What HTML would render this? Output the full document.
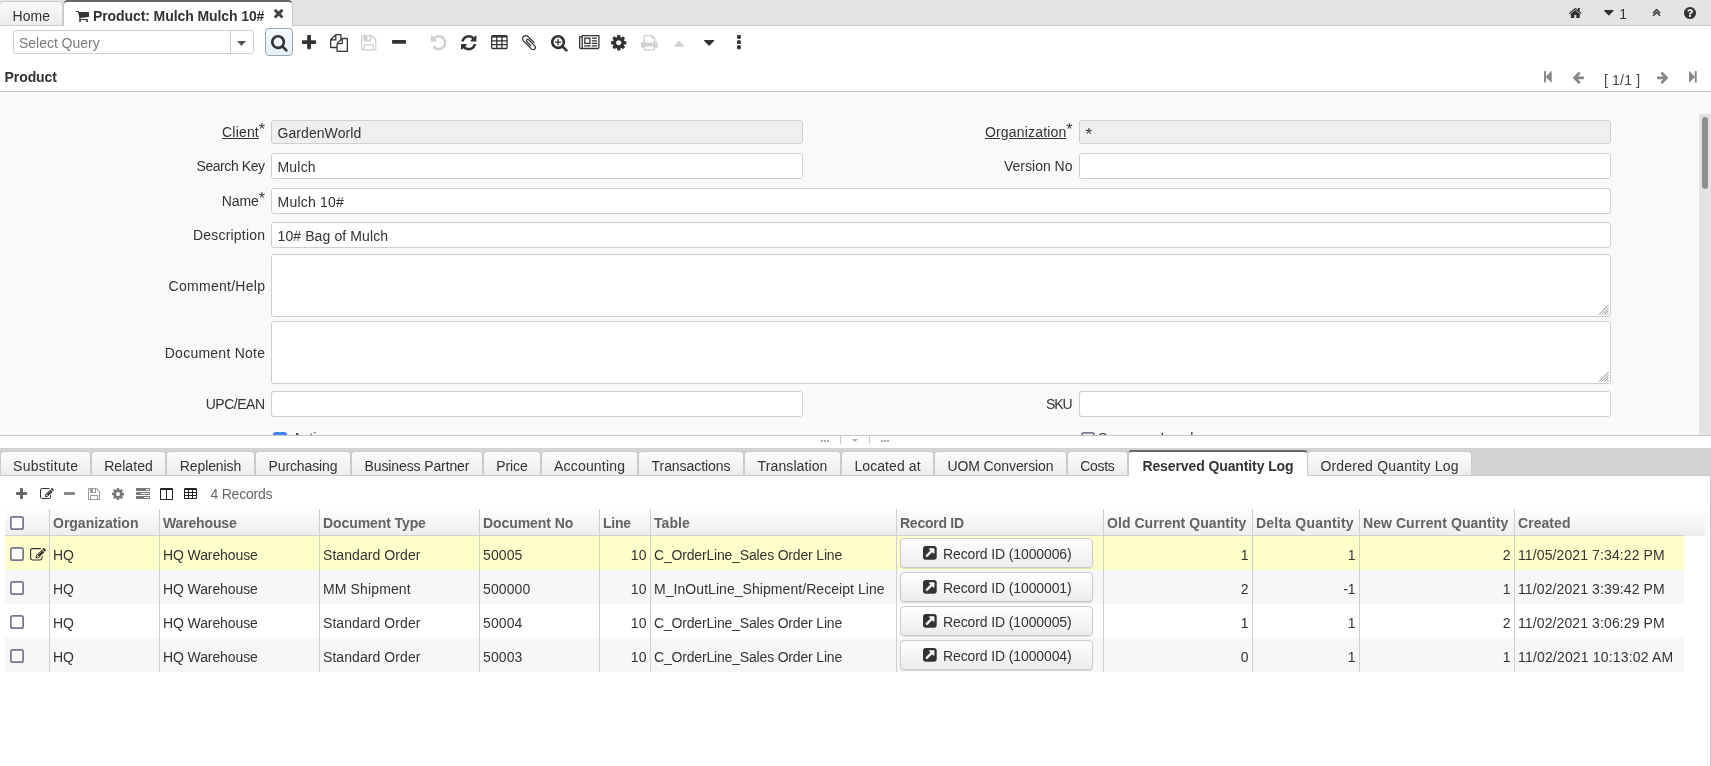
<!DOCTYPE html>
<html><head><meta charset="utf-8"><title>Product: Mulch Mulch 10#</title>
<style>
*{box-sizing:border-box}
html,body{margin:0;padding:0}
#root{position:absolute;left:0;top:0;width:1711px;height:766px;will-change:transform}
body{width:1711px;height:766px;overflow:hidden;position:relative;background:#fff;font-family:"Liberation Sans",sans-serif;font-size:14px;color:#333;line-height:20px}
.a{position:absolute;white-space:pre}
.ic{position:absolute;display:block;overflow:visible}
.b{font-weight:bold}
.inp{position:absolute;border:1px solid #cfcfcf;border-radius:3px;background:#fff;padding-left:5.5px;white-space:pre}
.ro{background:#efefef}
.lbl{position:absolute;text-align:right;white-space:pre}
.tab{position:absolute;top:451px;height:25px;border:1px solid #cbcbcb;border-bottom:none;border-radius:4px 4px 0 0;background:linear-gradient(#fcfcfc,#ececec);text-align:center;line-height:25px;white-space:pre}
.hc{position:absolute;top:509px;height:27px;border-left:1px solid #cfcfcf;font-weight:bold;color:#636363;padding-left:3px;line-height:28px;white-space:pre}
.row{position:absolute;left:5px;width:1679px;height:34px}
.c{position:absolute;top:0;height:34px;border-left:1px solid #cfcfcf;padding:0 3.5px 0 3px;line-height:39px;white-space:pre}
.r{text-align:right}
.cb{position:absolute;width:14px;height:14px;border:1.5px solid #767689;border-radius:2px;background:#fff}
.btn{position:absolute;left:895px;width:193px;height:30px;top:2px;border:1px solid #c9c9c9;border-radius:4px;background:linear-gradient(#fff,#ececec);box-shadow:0 1px 1px rgba(0,0,0,.12)}
</style></head><body><div id="root">
<div class="a" style="left:0;top:0;width:1711px;height:25px;background:#e4e4e4"></div>
<div class="a" style="left:0;top:25px;width:1711px;height:1px;background:#c8c8c8"></div>
<div class="a" style="left:-1px;top:1px;width:64px;height:25px;border:1px solid #cdcdcd;border-radius:4px 4px 0 0;background:linear-gradient(#fafafa,#ececec)"></div>
<div class="a" style="left:12.5px;top:6px"><span style="letter-spacing:0.102px;margin-right:-0.102px">Home</span></div>
<div class="a" style="left:63px;top:0;width:230px;height:26px;border:1px solid #c8c8c8;border-top:2px solid #666;border-bottom:none;border-radius:5px 5px 0 0;background:#fff"></div>
<svg class="ic" style="left:76.20px;top:11.00px;" width="13.00" height="11.00" viewBox="0 -1280 1664 1408"><path fill="#333" transform="scale(1,-1)" d="M640 0q0 -52 -38 -90t-90 -38t-90 38t-38 90t38 90t90 38t90 -38t38 -90zM1536 0q0 -52 -38 -90t-90 -38t-90 38t-38 90t38 90t90 38t90 -38t38 -90zM1664 1088v-512q0 -24 -16.5 -42.5t-40.5 -21.5l-1044 -122q13 -60 13 -70q0 -16 -24 -64h920q26 0 45 -19t19 -45 t-19 -45t-45 -19h-1024q-26 0 -45 19t-19 45q0 11 8 31.5t16 36t21.5 40t15.5 29.5l-177 823h-204q-26 0 -45 19t-19 45t19 45t45 19h256q16 0 28.5 -6.5t19.5 -15.5t13 -24.5t8 -26t5.5 -29.5t4.5 -26h1201q26 0 45 -19t19 -45z"/></svg>
<div class="a b" style="left:93px;top:6px"><span style="letter-spacing:-0.091px;margin-right:0.091px">Product: Mulch Mulch 10#</span></div>
<svg class="ic" style="left:273.70px;top:8.60px;" width="9.28" height="9.28" viewBox="110 -1170 1188 1188"><path fill="#444" transform="scale(1,-1)" d="M1298 214q0 -40 -28 -68l-136 -136q-28 -28 -68 -28t-68 28l-294 294l-294 -294q-28 -28 -68 -28t-68 28l-136 136q-28 28 -28 68t28 68l294 294l-294 294q-28 28 -28 68t28 68l136 136q28 28 68 28t68 -28l294 -294l294 294q28 28 68 28t68 -28l136 -136q28 -28 28 -68 t-28 -68l-294 -294l294 -294q28 -28 28 -68z"/></svg>
<svg class="ic" style="left:1568.50px;top:8.20px;" width="12.60" height="10.02" viewBox="25.88888931274414 -1283 1612.22216796875 1283"><path fill="#333" transform="scale(1,-1)" d="M1408 544v-480q0 -26 -19 -45t-45 -19h-384v384h-256v-384h-384q-26 0 -45 19t-19 45v480q0 1 0.5 3t0.5 3l575 474l575 -474q1 -2 1 -6zM1631 613l-62 -74q-8 -9 -21 -11h-3q-13 0 -21 7l-692 577l-692 -577q-12 -8 -24 -7q-13 2 -21 11l-62 74q-8 10 -7 23.5t11 21.5 l719 599q32 26 76 26t76 -26l244 -204v195q0 14 9 23t23 9h192q14 0 23 -9t9 -23v-408l219 -182q10 -8 11 -21.5t-7 -23.5z"/></svg>
<svg class="ic" style="left:1604.00px;top:10.30px;" width="9.71" height="5.46" viewBox="0 -896 1024 576"><path fill="#333" transform="scale(1,-1)" d="M1024 832q0 -26 -19 -45l-448 -448q-19 -19 -45 -19t-45 19l-448 448q-19 19 -19 45t19 45t45 19h896q26 0 45 -19t19 -45z"/></svg>
<div class="a" style="left:1619.3px;top:3.8px">1</div>
<svg class="ic" style="left:1652.60px;top:9.40px;" width="7.24" height="7.01" viewBox="77 -1107 998 966"><path fill="#333" stroke="#333" stroke-width="80" transform="scale(1,-1)" d="M1075 224q0 -13 -10 -23l-50 -50q-10 -10 -23 -10t-23 10l-393 393l-393 -393q-10 -10 -23 -10t-23 10l-50 50q-10 10 -10 23t10 23l466 466q10 10 23 10t23 -10l466 -466q10 -10 10 -23zM1075 608q0 -13 -10 -23l-50 -50q-10 -10 -23 -10t-23 10l-393 393l-393 -393 q-10 -10 -23 -10t-23 10l-50 50q-10 10 -10 23t10 23l466 466q10 10 23 10t23 -10l466 -466q10 -10 10 -23z"/></svg>
<svg class="ic" style="left:1683.80px;top:7.20px;" width="12.00" height="12.00" viewBox="0 -1408 1536 1536"><path fill="#333" transform="scale(1,-1)" d="M896 160v192q0 14 -9 23t-23 9h-192q-14 0 -23 -9t-9 -23v-192q0 -14 9 -23t23 -9h192q14 0 23 9t9 23zM1152 832q0 88 -55.5 163t-138.5 116t-170 41q-243 0 -371 -213q-15 -24 8 -42l132 -100q7 -6 19 -6q16 0 25 12q53 68 86 92q34 24 86 24q48 0 85.5 -26t37.5 -59 q0 -38 -20 -61t-68 -45q-63 -28 -115.5 -86.5t-52.5 -125.5v-36q0 -14 9 -23t23 -9h192q14 0 23 9t9 23q0 19 21.5 49.5t54.5 49.5q32 18 49 28.5t46 35t44.5 48t28 60.5t12.5 81zM1536 640q0 -209 -103 -385.5t-279.5 -279.5t-385.5 -103t-385.5 103t-279.5 279.5 t-103 385.5t103 385.5t279.5 279.5t385.5 103t385.5 -103t279.5 -279.5t103 -385.5z"/></svg>
<div class="a" style="left:13px;top:30px;width:241px;height:24px;border:1px solid #cfcfcf;border-radius:3px;background:#fff"></div>
<div class="a" style="left:230px;top:31px;width:1px;height:22px;background:#cfcfcf"></div>
<div class="a" style="left:19px;top:32.5px;color:#7c7c7c"><span style="letter-spacing:-0.025px;margin-right:0.025px">Select Query</span></div>
<svg class="ic" style="left:237.3px;top:41.3px" width="9" height="5" viewBox="0 0 9 5"><path d="M0 0H9L4.5 5Z" fill="#555"/></svg>
<div class="a" style="left:265px;top:28px;width:28px;height:28px;border:1px solid #9aa7b3;border-radius:4px;background:linear-gradient(#f4fafd,#e2eff8)"></div>
<svg class="ic" style="left:270.64px;top:34.96px;" width="16.71" height="16.71" viewBox="0 -1408 1664 1664"><path fill="#333" transform="scale(1,-1)" d="M1152 704q0 185 -131.5 316.5t-316.5 131.5t-316.5 -131.5t-131.5 -316.5t131.5 -316.5t316.5 -131.5t316.5 131.5t131.5 316.5zM1664 -128q0 -52 -38 -90t-90 -38q-54 0 -90 38l-343 342q-179 -124 -399 -124q-143 0 -273.5 55.5t-225 150t-150 225t-55.5 273.5 t55.5 273.5t150 225t225 150t273.5 55.5t273.5 -55.5t225 -150t150 -225t55.5 -273.5q0 -220 -124 -399l343 -343q37 -37 37 -90z"/></svg>
<svg class="ic" style="left:301.93px;top:34.96px;" width="14.14" height="14.14" viewBox="0 -1408 1408 1408"><path fill="#333" transform="scale(1,-1)" d="M1408 800v-192q0 -40 -28 -68t-68 -28h-416v-416q0 -40 -28 -68t-68 -28h-192q-40 0 -68 28t-28 68v416h-416q-40 0 -68 28t-28 68v192q0 40 28 68t68 28h416v416q0 40 28 68t68 28h192q40 0 68 -28t28 -68v-416h416q40 0 68 -28t28 -68z"/></svg>
<svg class="ic" style="left:330.00px;top:33.67px;" width="18.00" height="18.00" viewBox="0 -1536 1792 1792"><path fill="#333" transform="scale(1,-1)" d="M1696 1152q40 0 68 -28t28 -68v-1216q0 -40 -28 -68t-68 -28h-960q-40 0 -68 28t-28 68v288h-544q-40 0 -68 28t-28 68v672q0 40 20 88t48 76l408 408q28 28 76 48t88 20h416q40 0 68 -28t28 -68v-328q68 40 128 40h416zM1152 939l-299 -299h299v299zM512 1323l-299 -299 h299v299zM708 676l316 316v416h-384v-416q0 -40 -28 -68t-68 -28h-416v-640h512v256q0 40 20 88t48 76zM1664 -128v1152h-384v-416q0 -40 -28 -68t-68 -28h-416v-640h896z"/></svg>
<svg class="ic" style="left:361.29px;top:34.96px;" width="15.43" height="15.43" viewBox="0 -1408 1536 1536"><path fill="#d0d0d0" transform="scale(1,-1)" d="M384 0h768v384h-768v-384zM1280 0h128v896q0 14 -10 38.5t-20 34.5l-281 281q-10 10 -34 20t-39 10v-416q0 -40 -28 -68t-68 -28h-576q-40 0 -68 28t-28 68v416h-128v-1280h128v416q0 40 28 68t68 28h832q40 0 68 -28t28 -68v-416zM896 928v320q0 13 -9.5 22.5t-22.5 9.5 h-192q-13 0 -22.5 -9.5t-9.5 -22.5v-320q0 -13 9.5 -22.5t22.5 -9.5h192q13 0 22.5 9.5t9.5 22.5zM1536 896v-928q0 -40 -28 -68t-68 -28h-1344q-40 0 -68 28t-28 68v1344q0 40 28 68t68 28h928q40 0 88 -20t76 -48l280 -280q28 -28 48 -76t20 -88z"/></svg>
<svg class="ic" style="left:391.93px;top:40.10px;" width="14.14" height="3.86" viewBox="0 -896 1408 384"><path fill="#333" transform="scale(1,-1)" d="M1408 800v-192q0 -40 -28 -68t-68 -28h-1216q-40 0 -68 28t-28 68v192q0 40 28 68t68 28h1216q40 0 68 -28t28 -68z"/></svg>
<svg class="ic" style="left:431.29px;top:34.96px;" width="15.43" height="15.43" viewBox="0 -1408 1536 1536"><path fill="#d0d0d0" transform="scale(1,-1)" d="M1536 640q0 -156 -61 -298t-164 -245t-245 -164t-298 -61q-172 0 -327 72.5t-264 204.5q-7 10 -6.5 22.5t8.5 20.5l137 138q10 9 25 9q16 -2 23 -12q73 -95 179 -147t225 -52q104 0 198.5 40.5t163.5 109.5t109.5 163.5t40.5 198.5t-40.5 198.5t-109.5 163.5 t-163.5 109.5t-198.5 40.5q-98 0 -188 -35.5t-160 -101.5l137 -138q31 -30 14 -69q-17 -40 -59 -40h-448q-26 0 -45 19t-19 45v448q0 42 40 59q39 17 69 -14l130 -129q107 101 244.5 156.5t284.5 55.5q156 0 298 -61t245 -164t164 -245t61 -298z"/></svg>
<svg class="ic" style="left:461.29px;top:34.96px;" width="15.43" height="15.43" viewBox="0 -1408 1536 1536"><path fill="#333" transform="scale(1,-1)" d="M1511 480q0 -5 -1 -7q-64 -268 -268 -434.5t-478 -166.5q-146 0 -282.5 55t-243.5 157l-129 -129q-19 -19 -45 -19t-45 19t-19 45v448q0 26 19 45t45 19h448q26 0 45 -19t19 -45t-19 -45l-137 -137q71 -66 161 -102t187 -36q134 0 250 65t186 179q11 17 53 117 q8 23 30 23h192q13 0 22.5 -9.5t9.5 -22.5zM1536 1280v-448q0 -26 -19 -45t-45 -19h-448q-26 0 -45 19t-19 45t19 45l138 138q-148 137 -349 137q-134 0 -250 -65t-186 -179q-11 -17 -53 -117q-8 -23 -30 -23h-199q-13 0 -22.5 9.5t-9.5 22.5v7q65 268 270 434.5t480 166.5 q146 0 284 -55.5t245 -156.5l130 129q19 19 45 19t45 -19t19 -45z"/></svg>
<svg class="ic" style="left:490.64px;top:34.96px;" width="16.71" height="14.14" viewBox="0 -1408 1664 1408"><path fill="#333" transform="scale(1,-1)" d="M512 160v192q0 14 -9 23t-23 9h-320q-14 0 -23 -9t-9 -23v-192q0 -14 9 -23t23 -9h320q14 0 23 9t9 23zM512 544v192q0 14 -9 23t-23 9h-320q-14 0 -23 -9t-9 -23v-192q0 -14 9 -23t23 -9h320q14 0 23 9t9 23zM1024 160v192q0 14 -9 23t-23 9h-320q-14 0 -23 -9t-9 -23 v-192q0 -14 9 -23t23 -9h320q14 0 23 9t9 23zM512 928v192q0 14 -9 23t-23 9h-320q-14 0 -23 -9t-9 -23v-192q0 -14 9 -23t23 -9h320q14 0 23 9t9 23zM1024 544v192q0 14 -9 23t-23 9h-320q-14 0 -23 -9t-9 -23v-192q0 -14 9 -23t23 -9h320q14 0 23 9t9 23zM1536 160v192 q0 14 -9 23t-23 9h-320q-14 0 -23 -9t-9 -23v-192q0 -14 9 -23t23 -9h320q14 0 23 9t9 23zM1024 928v192q0 14 -9 23t-23 9h-320q-14 0 -23 -9t-9 -23v-192q0 -14 9 -23t23 -9h320q14 0 23 9t9 23zM1536 544v192q0 14 -9 23t-23 9h-320q-14 0 -23 -9t-9 -23v-192 q0 -14 9 -23t23 -9h320q14 0 23 9t9 23zM1536 928v192q0 14 -9 23t-23 9h-320q-14 0 -23 -9t-9 -23v-192q0 -14 9 -23t23 -9h320q14 0 23 9t9 23zM1664 1248v-1088q0 -66 -47 -113t-113 -47h-1344q-66 0 -113 47t-47 113v1088q0 66 47 113t113 47h1344q66 0 113 -47t47 -113 z"/></svg>
<svg class="ic" style="left:521.97px;top:35.00px;" width="14.06" height="15.35" viewBox="4 -1404 1400 1528"><path fill="#333" transform="scale(1,-1)" d="M1404 151q0 -117 -79 -196t-196 -79q-135 0 -235 100l-777 776q-113 115 -113 271q0 159 110 270t269 111q158 0 273 -113l605 -606q10 -10 10 -22q0 -16 -30.5 -46.5t-46.5 -30.5q-13 0 -23 10l-606 607q-79 77 -181 77q-106 0 -179 -75t-73 -181q0 -105 76 -181 l776 -777q63 -63 145 -63q64 0 106 42t42 106q0 82 -63 145l-581 581q-26 24 -60 24q-29 0 -48 -19t-19 -48q0 -32 25 -59l410 -410q10 -10 10 -22q0 -16 -31 -47t-47 -31q-12 0 -22 10l-410 410q-63 61 -63 149q0 82 57 139t139 57q88 0 149 -63l581 -581q100 -98 100 -235 z"/></svg>
<svg class="ic" style="left:550.64px;top:34.96px;" width="16.71" height="16.71" viewBox="0 -1408 1664 1664"><path fill="#333" transform="scale(1,-1)" d="M1024 736v-64q0 -13 -9.5 -22.5t-22.5 -9.5h-224v-224q0 -13 -9.5 -22.5t-22.5 -9.5h-64q-13 0 -22.5 9.5t-9.5 22.5v224h-224q-13 0 -22.5 9.5t-9.5 22.5v64q0 13 9.5 22.5t22.5 9.5h224v224q0 13 9.5 22.5t22.5 9.5h64q13 0 22.5 -9.5t9.5 -22.5v-224h224 q13 0 22.5 -9.5t9.5 -22.5zM1152 704q0 185 -131.5 316.5t-316.5 131.5t-316.5 -131.5t-131.5 -316.5t131.5 -316.5t316.5 -131.5t316.5 131.5t131.5 316.5zM1664 -128q0 -53 -37.5 -90.5t-90.5 -37.5q-54 0 -90 38l-343 342q-179 -124 -399 -124q-143 0 -273.5 55.5 t-225 150t-150 225t-55.5 273.5t55.5 273.5t150 225t225 150t273.5 55.5t273.5 -55.5t225 -150t150 -225t55.5 -273.5q0 -220 -124 -399l343 -343q37 -37 37 -90z"/></svg>
<svg class="ic" style="left:578.71px;top:34.96px;" width="20.57" height="14.14" viewBox="0 -1408 2048 1408"><path fill="#333" transform="scale(1,-1)" d="M1024 1024h-384v-384h384v384zM1152 384v-128h-640v128h640zM1152 1152v-640h-640v640h640zM1792 384v-128h-512v128h512zM1792 640v-128h-512v128h512zM1792 896v-128h-512v128h512zM1792 1152v-128h-512v128h512zM256 192v960h-128v-960q0 -26 19 -45t45 -19t45 19 t19 45zM1920 192v1088h-1536v-1088q0 -33 -11 -64h1483q26 0 45 19t19 45zM2048 1408v-1216q0 -80 -56 -136t-136 -56h-1664q-80 0 -136 56t-56 136v1088h256v128h1792z"/></svg>
<svg class="ic" style="left:611.29px;top:34.96px;" width="15.43" height="15.43" viewBox="0 -1408 1536 1536"><path fill="#333" transform="scale(1,-1)" d="M1024 640q0 106 -75 181t-181 75t-181 -75t-75 -181t75 -181t181 -75t181 75t75 181zM1536 749v-222q0 -12 -8 -23t-20 -13l-185 -28q-19 -54 -39 -91q35 -50 107 -138q10 -12 10 -25t-9 -23q-27 -37 -99 -108t-94 -71q-12 0 -26 9l-138 108q-44 -23 -91 -38 q-16 -136 -29 -186q-7 -28 -36 -28h-222q-14 0 -24.5 8.5t-11.5 21.5l-28 184q-49 16 -90 37l-141 -107q-10 -9 -25 -9q-14 0 -25 11q-126 114 -165 168q-7 10 -7 23q0 12 8 23q15 21 51 66.5t54 70.5q-27 50 -41 99l-183 27q-13 2 -21 12.5t-8 23.5v222q0 12 8 23t19 13 l186 28q14 46 39 92q-40 57 -107 138q-10 12 -10 24q0 10 9 23q26 36 98.5 107.5t94.5 71.5q13 0 26 -10l138 -107q44 23 91 38q16 136 29 186q7 28 36 28h222q14 0 24.5 -8.5t11.5 -21.5l28 -184q49 -16 90 -37l142 107q9 9 24 9q13 0 25 -10q129 -119 165 -170q7 -8 7 -22 q0 -12 -8 -23q-15 -21 -51 -66.5t-54 -70.5q26 -50 41 -98l183 -28q13 -2 21 -12.5t8 -23.5z"/></svg>
<svg class="ic" style="left:640.64px;top:34.96px;" width="16.71" height="15.43" viewBox="0 -1408 1664 1536"><path fill="#d0d0d0" transform="scale(1,-1)" d="M384 0h896v256h-896v-256zM384 640h896v384h-160q-40 0 -68 28t-28 68v160h-640v-640zM1536 576q0 26 -19 45t-45 19t-45 -19t-19 -45t19 -45t45 -19t45 19t19 45zM1664 576v-416q0 -13 -9.5 -22.5t-22.5 -9.5h-224v-160q0 -40 -28 -68t-68 -28h-960q-40 0 -68 28t-28 68 v160h-224q-13 0 -22.5 9.5t-9.5 22.5v416q0 79 56.5 135.5t135.5 56.5h64v544q0 40 28 68t68 28h672q40 0 88 -20t76 -48l152 -152q28 -28 48 -76t20 -88v-256h64q79 0 135.5 -56.5t56.5 -135.5z"/></svg>
<svg class="ic" style="left:673.86px;top:40.74px;" width="10.29" height="5.79" viewBox="0 -832 1024 576"><path fill="#d0d0d0" transform="scale(1,-1)" d="M1024 320q0 -26 -19 -45t-45 -19h-896q-26 0 -45 19t-19 45t19 45l448 448q19 19 45 19t45 -19l448 -448q19 -19 19 -45z"/></svg>
<svg class="ic" style="left:703.86px;top:40.10px;" width="10.29" height="5.79" viewBox="0 -896 1024 576"><path fill="#333" transform="scale(1,-1)" d="M1024 832q0 -26 -19 -45l-448 -448q-19 -19 -45 -19t-45 19l-448 448q-19 19 -19 45t19 45t45 19h896q26 0 45 -19t19 -45z"/></svg>
<svg class="ic" style="left:737.07px;top:34.96px;" width="3.86" height="14.14" viewBox="0 -1408 384 1408"><path fill="#333" transform="scale(1,-1)" d="M384 288v-192q0 -40 -28 -68t-68 -28h-192q-40 0 -68 28t-28 68v192q0 40 28 68t68 28h192q40 0 68 -28t28 -68zM384 800v-192q0 -40 -28 -68t-68 -28h-192q-40 0 -68 28t-28 68v192q0 40 28 68t68 28h192q40 0 68 -28t28 -68zM384 1312v-192q0 -40 -28 -68t-68 -28h-192 q-40 0 -68 28t-28 68v192q0 40 28 68t68 28h192q40 0 68 -28t28 -68z"/></svg>
<div class="a b" style="left:4.5px;top:66.5px"><span style="letter-spacing:-0.067px;margin-right:0.067px">Product</span></div>
<svg class="ic" style="left:1543.80px;top:70.90px;" width="7.71" height="11.59" viewBox="0 -1409.4398803710938 1024 1538.8798828125"><path fill="#888" transform="scale(1,-1)" d="M979 1395q19 19 32 13t13 -32v-1472q0 -26 -13 -32t-32 13l-710 710q-9 9 -13 19v-678q0 -26 -19 -45t-45 -19h-128q-26 0 -45 19t-19 45v1408q0 26 19 45t45 19h128q26 0 45 -19t19 -45v-678q4 10 13 19z"/></svg>
<svg class="ic" style="left:1572.60px;top:71.50px;" width="11.09" height="11.74" viewBox="64 -1355 1472 1558"><path fill="#888" transform="scale(1,-1)" d="M1536 640v-128q0 -53 -32.5 -90.5t-84.5 -37.5h-704l293 -294q38 -36 38 -90t-38 -90l-75 -76q-37 -37 -90 -37q-52 0 -91 37l-651 652q-37 37 -37 90q0 52 37 91l651 650q38 38 91 38q52 0 90 -38l75 -74q38 -38 38 -91t-38 -91l-293 -293h704q52 0 84.5 -37.5 t32.5 -90.5z"/></svg>
<div class="a" style="left:1604px;top:69.5px;color:#444"><span style="letter-spacing:0.172px;margin-right:-0.172px">[ 1/1 ]</span></div>
<svg class="ic" style="left:1656.80px;top:71.50px;" width="11.09" height="11.74" viewBox="0 -1355 1472 1558"><path fill="#888" transform="scale(1,-1)" d="M1472 576q0 -54 -37 -91l-651 -651q-39 -37 -91 -37q-51 0 -90 37l-75 75q-38 38 -38 91t38 91l293 293h-704q-52 0 -84.5 37.5t-32.5 90.5v128q0 53 32.5 90.5t84.5 37.5h704l-293 294q-38 36 -38 90t38 90l75 75q38 38 90 38q53 0 91 -38l651 -651q37 -35 37 -90z"/></svg>
<svg class="ic" style="left:1688.80px;top:70.90px;" width="7.71" height="11.59" viewBox="0 -1409.4398803710938 1024 1538.8798828125"><path fill="#888" transform="scale(1,-1)" d="M45 -115q-19 -19 -32 -13t-13 32v1472q0 26 13 32t32 -13l710 -710q9 -9 13 -19v678q0 26 19 45t45 19h128q26 0 45 -19t19 -45v-1408q0 -26 -19 -45t-45 -19h-128q-26 0 -45 19t-19 45v678q-4 -10 -13 -19z"/></svg>
<div class="a" style="left:0;top:91px;width:1711px;height:1px;background:#c8c8c8"></div>
<div class="a" style="left:0;top:92px;width:1711px;height:343px;background:#f9f9f9;overflow:hidden">
<div class="inp ro" style="left:271px;top:28px;width:532px;height:24px;line-height:24px"><span style="letter-spacing:0.070px;margin-right:-0.070px">GardenWorld</span></div>
<div class="inp ro" style="left:1079px;top:28px;width:532px;height:24px;line-height:24px"><span style="font-size:17px;position:relative;top:2px">*</span></div>
<div class="inp" style="left:271px;top:61px;width:532px;height:26px;line-height:26px"><span style="letter-spacing:0.197px;margin-right:-0.197px">Mulch</span></div>
<div class="inp" style="left:1079px;top:61px;width:532px;height:26px;line-height:26px"></div>
<div class="inp" style="left:271px;top:96px;width:1340px;height:26px;line-height:26px"><span style="letter-spacing:0.217px;margin-right:-0.217px">Mulch 10#</span></div>
<div class="inp" style="left:271px;top:130px;width:1340px;height:26px;line-height:26px"><span style="letter-spacing:0.104px;margin-right:-0.104px">10# Bag of Mulch</span></div>
<div class="inp" style="left:271px;top:162px;width:1340px;height:63px;line-height:63px"><svg class="ic" style="right:1px;bottom:1px" width="11" height="11" viewBox="0 0 11 11"><path d="M10.5 1L1 10.5M10.5 4L4 10.5M10.5 6.5L6.5 10.5M10.5 9L9 10.5" stroke="#777" stroke-width="0.9" fill="none"/></svg></div>
<div class="inp" style="left:271px;top:229px;width:1340px;height:63px;line-height:63px"><svg class="ic" style="right:1px;bottom:1px" width="11" height="11" viewBox="0 0 11 11"><path d="M10.5 1L1 10.5M10.5 4L4 10.5M10.5 6.5L6.5 10.5M10.5 9L9 10.5" stroke="#777" stroke-width="0.9" fill="none"/></svg></div>
<div class="inp" style="left:271px;top:299px;width:532px;height:26px;line-height:26px"></div>
<div class="inp" style="left:1079px;top:299px;width:532px;height:26px;line-height:26px"></div>
<div class="lbl" style="right:1446px;top:30px"><span style="text-decoration:underline"><span style="letter-spacing:0.182px;margin-right:-0.182px">Client</span></span><span style="position:relative;top:-2.5px;font-size:16px;line-height:10px">*</span></div>
<div class="lbl" style="right:638.5px;top:30px"><span style="text-decoration:underline"><span style="letter-spacing:0.176px;margin-right:-0.176px">Organization</span></span><span style="position:relative;top:-2.5px;font-size:16px;line-height:10px">*</span></div>
<div class="lbl" style="right:1446px;top:64px"><span style="letter-spacing:-0.428px;margin-right:0.428px">Search Key</span></div>
<div class="lbl" style="right:638.5px;top:64px">Version No</div>
<div class="lbl" style="right:1446px;top:99px"><span style="letter-spacing:-0.086px;margin-right:0.086px">Name</span><span style="position:relative;top:-2.5px;font-size:16px;line-height:10px">*</span></div>
<div class="lbl" style="right:1446px;top:133px"><span style="letter-spacing:0.196px;margin-right:-0.196px">Description</span></div>
<div class="lbl" style="right:1446px;top:184px"><span style="letter-spacing:0.273px;margin-right:-0.273px">Comment/Help</span></div>
<div class="lbl" style="right:1446px;top:251px"><span style="letter-spacing:0.246px;margin-right:-0.246px">Document Note</span></div>
<div class="lbl" style="right:1446px;top:302px"><span style="letter-spacing:-0.484px;margin-right:0.484px">UPC/EAN</span></div>
<div class="lbl" style="right:638.5px;top:302px"><span style="letter-spacing:-1.120px;margin-right:1.120px">SKU</span></div>
<div class="a" style="left:273px;top:339.7px;width:14px;height:14px;border-radius:3px;background:#3b82f6"></div>
<div class="a" style="left:292.5px;top:335.7px"><span style="letter-spacing:0.148px;margin-right:-0.148px">Active</span></div>
<svg class="ic" style="left:1081px;top:339.7px" width="14" height="14" viewBox="0 0 14 14"><rect x="0.85" y="0.85" width="12.3" height="12.3" rx="2" ry="2" fill="#fff" stroke="#767691" stroke-width="1.7"/></svg>
<div class="a" style="left:1098px;top:335.7px"><span style="letter-spacing:-0.150px;margin-right:0.150px">Summary Level</span></div>
<div class="a" style="left:1699px;top:22px;width:12px;height:321px;background:#e3e3e3"></div>
<div class="a" style="left:1702px;top:25px;width:6px;height:72px;border-radius:3px;background:#8f8f8f"></div>
</div>
<div class="a" style="left:0;top:435px;width:1711px;height:1px;background:#c8c8c8"></div>
<div class="a" style="left:840px;top:436px;width:1px;height:8px;background:#c8c8c8"></div>
<div class="a" style="left:869px;top:436px;width:1px;height:8px;background:#c8c8c8"></div>
<div class="a" style="left:821px;top:440px;width:2px;height:2px;background:#aaa"></div>
<div class="a" style="left:824px;top:440px;width:2px;height:2px;background:#aaa"></div>
<div class="a" style="left:827px;top:440px;width:2px;height:2px;background:#aaa"></div>
<div class="a" style="left:881px;top:440px;width:2px;height:2px;background:#aaa"></div>
<div class="a" style="left:884px;top:440px;width:2px;height:2px;background:#aaa"></div>
<div class="a" style="left:887px;top:440px;width:2px;height:2px;background:#aaa"></div>
<div class="a" style="left:851.5px;top:439px;width:0;height:0;border-left:3.5px solid transparent;border-right:3.5px solid transparent;border-top:3.5px solid #aaa"></div>
<div class="a" style="left:0;top:448px;width:1711px;height:28px;background:#d4d4d4"></div>
<div class="tab" style="left:0px;width:91px;line-height:28px"><span style="letter-spacing:0.294px;margin-right:-0.294px">Substitute</span></div>
<div class="tab" style="left:91px;width:75px;line-height:28px"><span style="letter-spacing:0.065px;margin-right:-0.065px">Related</span></div>
<div class="tab" style="left:166px;width:89px;line-height:28px"><span style="letter-spacing:-0.087px;margin-right:0.087px">Replenish</span></div>
<div class="tab" style="left:255px;width:96px;line-height:28px"><span style="letter-spacing:-0.116px;margin-right:0.116px">Purchasing</span></div>
<div class="tab" style="left:351px;width:132px;line-height:28px"><span style="letter-spacing:-0.117px;margin-right:0.117px">Business Partner</span></div>
<div class="tab" style="left:483px;width:58px;line-height:28px"><span style="letter-spacing:-0.125px;margin-right:0.125px">Price</span></div>
<div class="tab" style="left:541px;width:97px;line-height:28px"><span style="letter-spacing:0.188px;margin-right:-0.188px">Accounting</span></div>
<div class="tab" style="left:638px;width:106px;line-height:28px"><span style="letter-spacing:-0.073px;margin-right:0.073px">Transactions</span></div>
<div class="tab" style="left:744px;width:97px;line-height:28px"><span style="letter-spacing:0.101px;margin-right:-0.101px">Translation</span></div>
<div class="tab" style="left:841px;width:93px;line-height:28px"><span style="letter-spacing:0.089px;margin-right:-0.089px">Located at</span></div>
<div class="tab" style="left:934px;width:133px;line-height:28px"><span style="letter-spacing:-0.096px;margin-right:0.096px">UOM Conversion</span></div>
<div class="tab" style="left:1067px;width:61px;line-height:28px"><span style="letter-spacing:-0.275px;margin-right:0.275px">Costs</span></div>
<div class="tab b" style="left:1128px;width:180px;top:450px;height:26px;background:#fff;border-top:2px solid #666;line-height:28px;z-index:2"><span style="letter-spacing:-0.103px;margin-right:0.103px">Reserved Quantity Log</span></div>
<div class="tab" style="left:1307px;width:165px;line-height:28px"><span style="letter-spacing:0.182px;margin-right:-0.182px">Ordered Quantity Log</span></div>
<div class="a" style="left:0;top:475px;width:1711px;height:1px;background:#cbcbcb;z-index:1"></div>
<div class="a" style="left:1710px;top:476px;width:1px;height:290px;background:#c8c8c8"></div>
<svg class="ic" style="left:16.00px;top:488.00px;" width="11.00" height="11.00" viewBox="0 -1408 1408 1408"><path fill="#666" transform="scale(1,-1)" d="M1408 800v-192q0 -40 -28 -68t-68 -28h-416v-416q0 -40 -28 -68t-68 -28h-192q-40 0 -68 28t-28 68v416h-416q-40 0 -68 28t-28 68v192q0 40 28 68t68 28h416v416q0 40 28 68t68 28h192q40 0 68 -28t28 -68v-416h416q40 0 68 -28t28 -68z"/></svg>
<svg class="ic" style="left:40.03px;top:488.00px;" width="13.94" height="11.00" viewBox="0 -1408 1784 1408"><path fill="#333" transform="scale(1,-1)" d="M888 352l116 116l-152 152l-116 -116v-56h96v-96h56zM1328 1072q-16 16 -33 -1l-350 -350q-17 -17 -1 -33t33 1l350 350q17 17 1 33zM1408 478v-190q0 -119 -84.5 -203.5t-203.5 -84.5h-832q-119 0 -203.5 84.5t-84.5 203.5v832q0 119 84.5 203.5t203.5 84.5h832 q63 0 117 -25q15 -7 18 -23q3 -17 -9 -29l-49 -49q-14 -14 -32 -8q-23 6 -45 6h-832q-66 0 -113 -47t-47 -113v-832q0 -66 47 -113t113 -47h832q66 0 113 47t47 113v126q0 13 9 22l64 64q15 15 35 7t20 -29zM1312 1216l288 -288l-672 -672h-288v288zM1756 1084l-92 -92 l-288 288l92 92q28 28 68 28t68 -28l152 -152q28 -28 28 -68t-28 -68z"/></svg>
<svg class="ic" style="left:64.20px;top:492.00px;" width="11.00" height="3.00" viewBox="0 -896 1408 384"><path fill="#888" transform="scale(1,-1)" d="M1408 800v-192q0 -40 -28 -68t-68 -28h-1216q-40 0 -68 28t-28 68v192q0 40 28 68t68 28h1216q40 0 68 -28t28 -68z"/></svg>
<svg class="ic" style="left:87.85px;top:488.00px;" width="12.00" height="12.00" viewBox="0 -1408 1536 1536"><path fill="#999" transform="scale(1,-1)" d="M384 0h768v384h-768v-384zM1280 0h128v896q0 14 -10 38.5t-20 34.5l-281 281q-10 10 -34 20t-39 10v-416q0 -40 -28 -68t-68 -28h-576q-40 0 -68 28t-28 68v416h-128v-1280h128v416q0 40 28 68t68 28h832q40 0 68 -28t28 -68v-416zM896 928v320q0 13 -9.5 22.5t-22.5 9.5 h-192q-13 0 -22.5 -9.5t-9.5 -22.5v-320q0 -13 9.5 -22.5t22.5 -9.5h192q13 0 22.5 9.5t9.5 22.5zM1536 896v-928q0 -40 -28 -68t-68 -28h-1344q-40 0 -68 28t-28 68v1344q0 40 28 68t68 28h928q40 0 88 -20t76 -48l280 -280q28 -28 48 -76t20 -88z"/></svg>
<svg class="ic" style="left:112.00px;top:488.00px;" width="12.00" height="12.00" viewBox="0 -1408 1536 1536"><path fill="#777" transform="scale(1,-1)" d="M1024 640q0 106 -75 181t-181 75t-181 -75t-75 -181t75 -181t181 -75t181 75t75 181zM1536 749v-222q0 -12 -8 -23t-20 -13l-185 -28q-19 -54 -39 -91q35 -50 107 -138q10 -12 10 -25t-9 -23q-27 -37 -99 -108t-94 -71q-12 0 -26 9l-138 108q-44 -23 -91 -38 q-16 -136 -29 -186q-7 -28 -36 -28h-222q-14 0 -24.5 8.5t-11.5 21.5l-28 184q-49 16 -90 37l-141 -107q-10 -9 -25 -9q-14 0 -25 11q-126 114 -165 168q-7 10 -7 23q0 12 8 23q15 21 51 66.5t54 70.5q-27 50 -41 99l-183 27q-13 2 -21 12.5t-8 23.5v222q0 12 8 23t19 13 l186 28q14 46 39 92q-40 57 -107 138q-10 12 -10 24q0 10 9 23q26 36 98.5 107.5t94.5 71.5q13 0 26 -10l138 -107q44 23 91 38q16 136 29 186q7 28 36 28h222q14 0 24.5 -8.5t11.5 -21.5l28 -184q49 -16 90 -37l142 107q9 9 24 9q13 0 25 -10q129 -119 165 -170q7 -8 7 -22 q0 -12 -8 -23q-15 -21 -51 -66.5t-54 -70.5q26 -50 41 -98l183 -28q13 -2 21 -12.5t8 -23.5z"/></svg>
<svg class="ic" style="left:136.00px;top:488.00px;" width="14.00" height="11.00" viewBox="0 -1408 1792 1408"><path fill="#777" transform="scale(1,-1)" d="M1024 128h640v128h-640v-128zM640 640h1024v128h-1024v-128zM1280 1152h384v128h-384v-128zM1792 320v-256q0 -26 -19 -45t-45 -19h-1664q-26 0 -45 19t-19 45v256q0 26 19 45t45 19h1664q26 0 45 -19t19 -45zM1792 832v-256q0 -26 -19 -45t-45 -19h-1664q-26 0 -45 19 t-19 45v256q0 26 19 45t45 19h1664q26 0 45 -19t19 -45zM1792 1344v-256q0 -26 -19 -45t-45 -19h-1664q-26 0 -45 19t-19 45v256q0 26 19 45t45 19h1664q26 0 45 -19t19 -45z"/></svg>
<svg class="ic" style="left:160.00px;top:488.00px;" width="13.00" height="12.00" viewBox="0 -1408 1664 1536"><path fill="#222" transform="scale(1,-1)" d="M160 0h608v1152h-640v-1120q0 -13 9.5 -22.5t22.5 -9.5zM1536 32v1120h-640v-1152h608q13 0 22.5 9.5t9.5 22.5zM1664 1248v-1216q0 -66 -47 -113t-113 -47h-1344q-66 0 -113 47t-47 113v1216q0 66 47 113t113 47h1344q66 0 113 -47t47 -113z"/></svg>
<svg class="ic" style="left:184.00px;top:488.00px;" width="13.00" height="11.00" viewBox="0 -1408 1664 1408"><path fill="#222" transform="scale(1,-1)" d="M512 160v192q0 14 -9 23t-23 9h-320q-14 0 -23 -9t-9 -23v-192q0 -14 9 -23t23 -9h320q14 0 23 9t9 23zM512 544v192q0 14 -9 23t-23 9h-320q-14 0 -23 -9t-9 -23v-192q0 -14 9 -23t23 -9h320q14 0 23 9t9 23zM1024 160v192q0 14 -9 23t-23 9h-320q-14 0 -23 -9t-9 -23 v-192q0 -14 9 -23t23 -9h320q14 0 23 9t9 23zM512 928v192q0 14 -9 23t-23 9h-320q-14 0 -23 -9t-9 -23v-192q0 -14 9 -23t23 -9h320q14 0 23 9t9 23zM1024 544v192q0 14 -9 23t-23 9h-320q-14 0 -23 -9t-9 -23v-192q0 -14 9 -23t23 -9h320q14 0 23 9t9 23zM1536 160v192 q0 14 -9 23t-23 9h-320q-14 0 -23 -9t-9 -23v-192q0 -14 9 -23t23 -9h320q14 0 23 9t9 23zM1024 928v192q0 14 -9 23t-23 9h-320q-14 0 -23 -9t-9 -23v-192q0 -14 9 -23t23 -9h320q14 0 23 9t9 23zM1536 544v192q0 14 -9 23t-23 9h-320q-14 0 -23 -9t-9 -23v-192 q0 -14 9 -23t23 -9h320q14 0 23 9t9 23zM1536 928v192q0 14 -9 23t-23 9h-320q-14 0 -23 -9t-9 -23v-192q0 -14 9 -23t23 -9h320q14 0 23 9t9 23zM1664 1248v-1088q0 -66 -47 -113t-113 -47h-1344q-66 0 -113 47t-47 113v1088q0 66 47 113t113 47h1344q66 0 113 -47t47 -113 z"/></svg>
<div class="a" style="left:210.5px;top:484px;color:#666"><span style="letter-spacing:-0.229px;margin-right:0.229px">4 Records</span></div>
<div class="a" style="left:5px;top:509px;width:1700px;height:27px;background:linear-gradient(#fefefe,#ededed)"></div>
<div class="a" style="left:5px;top:535px;width:1679px;height:1px;background:#cfcfcf"></div>
<div class="hc" style="left:49px;width:110px"><span style="letter-spacing:-0.010px;margin-right:0.010px">Organization</span></div>
<div class="hc" style="left:159px;width:160px"><span style="letter-spacing:-0.148px;margin-right:0.148px">Warehouse</span></div>
<div class="hc" style="left:319px;width:160px"><span style="letter-spacing:-0.090px;margin-right:0.090px">Document Type</span></div>
<div class="hc" style="left:479px;width:120px"><span style="letter-spacing:-0.068px;margin-right:0.068px">Document No</span></div>
<div class="hc" style="left:599px;width:51px"><span style="letter-spacing:-0.230px;margin-right:0.230px">Line</span></div>
<div class="hc" style="left:650px;width:246px"><span style="letter-spacing:0.050px;margin-right:-0.050px">Table</span></div>
<div class="hc" style="left:896px;width:207px"><span style="letter-spacing:-0.260px;margin-right:0.260px">Record ID</span></div>
<div class="hc" style="left:1103px;width:149px"><span style="letter-spacing:0.050px;margin-right:-0.050px">Old Current Quantity</span></div>
<div class="hc" style="left:1252px;width:107px"><span style="letter-spacing:0.204px;margin-right:-0.204px">Delta Quantity</span></div>
<div class="hc" style="left:1359px;width:155px"><span style="letter-spacing:0.067px;margin-right:-0.067px">New Current Quantity</span></div>
<div class="hc" style="left:1514px;width:170px"><span style="letter-spacing:0.056px;margin-right:-0.056px">Created</span></div>
<svg class="ic" style="left:10px;top:516px" width="14" height="14" viewBox="0 0 14 14"><rect x="0.85" y="0.85" width="12.3" height="12.3" rx="2" ry="2" fill="#fff" stroke="#767691" stroke-width="1.7"/></svg>
<div class="row" style="top:536px;background:#ffffcc">
<svg class="ic" style="left:5px;top:11px" width="14" height="14" viewBox="0 0 14 14"><rect x="0.85" y="0.85" width="12.3" height="12.3" rx="2" ry="2" fill="#fff" stroke="#767691" stroke-width="1.7"/></svg>
<svg class="ic" style="left:25.20px;top:11.60px;" width="15.93" height="12.57" viewBox="0 -1408 1784 1408"><path fill="#333" transform="scale(1,-1)" d="M888 352l116 116l-152 152l-116 -116v-56h96v-96h56zM1328 1072q-16 16 -33 -1l-350 -350q-17 -17 -1 -33t33 1l350 350q17 17 1 33zM1408 478v-190q0 -119 -84.5 -203.5t-203.5 -84.5h-832q-119 0 -203.5 84.5t-84.5 203.5v832q0 119 84.5 203.5t203.5 84.5h832 q63 0 117 -25q15 -7 18 -23q3 -17 -9 -29l-49 -49q-14 -14 -32 -8q-23 6 -45 6h-832q-66 0 -113 -47t-47 -113v-832q0 -66 47 -113t113 -47h832q66 0 113 47t47 113v126q0 13 9 22l64 64q15 15 35 7t20 -29zM1312 1216l288 -288l-672 -672h-288v288zM1756 1084l-92 -92 l-288 288l92 92q28 28 68 28t68 -28l152 -152q28 -28 28 -68t-28 -68z"/></svg>
<div class="c" style="left:44px;width:110px"><span style="letter-spacing:-0.188px;margin-right:0.188px">HQ</span></div>
<div class="c" style="left:154px;width:160px"><span style="letter-spacing:-0.105px;margin-right:0.105px">HQ Warehouse</span></div>
<div class="c" style="left:314px;width:160px"><span style="letter-spacing:0.069px;margin-right:-0.069px">Standard Order</span></div>
<div class="c" style="left:474px;width:120px"><span style="letter-spacing:0.109px;margin-right:-0.109px">50005</span></div>
<div class="c r" style="left:594px;width:51px"><span style="letter-spacing:0.109px;margin-right:-0.109px">10</span></div>
<div class="c" style="left:645px;width:246px"><span style="letter-spacing:-0.177px;margin-right:0.177px">C_OrderLine_Sales Order Line</span></div>
<div class="c" style="left:891px;width:207px"></div>
<div class="btn"></div>
<svg class="ic" style="left:918.00px;top:9.80px;" width="13.71" height="13.71" viewBox="0 -1408 1536 1536"><path fill="#333" transform="scale(1,-1)" d="M1280 608v480q0 26 -19 45t-45 19h-480q-42 0 -59 -39q-17 -41 14 -70l144 -144l-534 -534q-19 -19 -19 -45t19 -45l102 -102q19 -19 45 -19t45 19l534 534l144 -144q18 -19 45 -19q12 0 25 5q39 17 39 59zM1536 1120v-960q0 -119 -84.5 -203.5t-203.5 -84.5h-960 q-119 0 -203.5 84.5t-84.5 203.5v960q0 119 84.5 203.5t203.5 84.5h960q119 0 203.5 -84.5t84.5 -203.5z"/></svg>
<div class="a" style="left:938px;top:8px"><span style="letter-spacing:-0.116px;margin-right:0.116px">Record ID (1000006)</span></div>
<div class="c r" style="left:1098px;width:149px"><span style="letter-spacing:0.109px;margin-right:-0.109px">1</span></div>
<div class="c r" style="left:1247px;width:107px"><span style="letter-spacing:0.109px;margin-right:-0.109px">1</span></div>
<div class="c r" style="left:1354px;width:155px"><span style="letter-spacing:0.109px;margin-right:-0.109px">2</span></div>
<div class="c" style="left:1509px;width:170px"><span style="letter-spacing:0.108px;margin-right:-0.108px">11/05/2021 7:34:22 PM</span></div>
</div>
<div class="row" style="top:570px;background:#f7f7f7">
<svg class="ic" style="left:5px;top:11px" width="14" height="14" viewBox="0 0 14 14"><rect x="0.85" y="0.85" width="12.3" height="12.3" rx="2" ry="2" fill="#fff" stroke="#767691" stroke-width="1.7"/></svg>
<div class="c" style="left:44px;width:110px"><span style="letter-spacing:-0.188px;margin-right:0.188px">HQ</span></div>
<div class="c" style="left:154px;width:160px"><span style="letter-spacing:-0.105px;margin-right:0.105px">HQ Warehouse</span></div>
<div class="c" style="left:314px;width:160px"><span style="letter-spacing:0.129px;margin-right:-0.129px">MM Shipment</span></div>
<div class="c" style="left:474px;width:120px"><span style="letter-spacing:0.112px;margin-right:-0.112px">500000</span></div>
<div class="c r" style="left:594px;width:51px"><span style="letter-spacing:0.109px;margin-right:-0.109px">10</span></div>
<div class="c" style="left:645px;width:246px"><span style="letter-spacing:0.056px;margin-right:-0.056px">M_InOutLine_Shipment/Receipt Line</span></div>
<div class="c" style="left:891px;width:207px"></div>
<div class="btn"></div>
<svg class="ic" style="left:918.00px;top:9.80px;" width="13.71" height="13.71" viewBox="0 -1408 1536 1536"><path fill="#333" transform="scale(1,-1)" d="M1280 608v480q0 26 -19 45t-45 19h-480q-42 0 -59 -39q-17 -41 14 -70l144 -144l-534 -534q-19 -19 -19 -45t19 -45l102 -102q19 -19 45 -19t45 19l534 534l144 -144q18 -19 45 -19q12 0 25 5q39 17 39 59zM1536 1120v-960q0 -119 -84.5 -203.5t-203.5 -84.5h-960 q-119 0 -203.5 84.5t-84.5 203.5v960q0 119 84.5 203.5t203.5 84.5h960q119 0 203.5 -84.5t84.5 -203.5z"/></svg>
<div class="a" style="left:938px;top:8px"><span style="letter-spacing:-0.116px;margin-right:0.116px">Record ID (1000001)</span></div>
<div class="c r" style="left:1098px;width:149px"><span style="letter-spacing:0.109px;margin-right:-0.109px">2</span></div>
<div class="c r" style="left:1247px;width:107px"><span style="letter-spacing:-0.250px;margin-right:0.250px">-1</span></div>
<div class="c r" style="left:1354px;width:155px"><span style="letter-spacing:0.109px;margin-right:-0.109px">1</span></div>
<div class="c" style="left:1509px;width:170px"><span style="letter-spacing:0.108px;margin-right:-0.108px">11/02/2021 3:39:42 PM</span></div>
</div>
<div class="row" style="top:604px;background:#fff">
<svg class="ic" style="left:5px;top:11px" width="14" height="14" viewBox="0 0 14 14"><rect x="0.85" y="0.85" width="12.3" height="12.3" rx="2" ry="2" fill="#fff" stroke="#767691" stroke-width="1.7"/></svg>
<div class="c" style="left:44px;width:110px"><span style="letter-spacing:-0.188px;margin-right:0.188px">HQ</span></div>
<div class="c" style="left:154px;width:160px"><span style="letter-spacing:-0.105px;margin-right:0.105px">HQ Warehouse</span></div>
<div class="c" style="left:314px;width:160px"><span style="letter-spacing:0.069px;margin-right:-0.069px">Standard Order</span></div>
<div class="c" style="left:474px;width:120px"><span style="letter-spacing:0.109px;margin-right:-0.109px">50004</span></div>
<div class="c r" style="left:594px;width:51px"><span style="letter-spacing:0.109px;margin-right:-0.109px">10</span></div>
<div class="c" style="left:645px;width:246px"><span style="letter-spacing:-0.177px;margin-right:0.177px">C_OrderLine_Sales Order Line</span></div>
<div class="c" style="left:891px;width:207px"></div>
<div class="btn"></div>
<svg class="ic" style="left:918.00px;top:9.80px;" width="13.71" height="13.71" viewBox="0 -1408 1536 1536"><path fill="#333" transform="scale(1,-1)" d="M1280 608v480q0 26 -19 45t-45 19h-480q-42 0 -59 -39q-17 -41 14 -70l144 -144l-534 -534q-19 -19 -19 -45t19 -45l102 -102q19 -19 45 -19t45 19l534 534l144 -144q18 -19 45 -19q12 0 25 5q39 17 39 59zM1536 1120v-960q0 -119 -84.5 -203.5t-203.5 -84.5h-960 q-119 0 -203.5 84.5t-84.5 203.5v960q0 119 84.5 203.5t203.5 84.5h960q119 0 203.5 -84.5t84.5 -203.5z"/></svg>
<div class="a" style="left:938px;top:8px"><span style="letter-spacing:-0.116px;margin-right:0.116px">Record ID (1000005)</span></div>
<div class="c r" style="left:1098px;width:149px"><span style="letter-spacing:0.109px;margin-right:-0.109px">1</span></div>
<div class="c r" style="left:1247px;width:107px"><span style="letter-spacing:0.109px;margin-right:-0.109px">1</span></div>
<div class="c r" style="left:1354px;width:155px"><span style="letter-spacing:0.109px;margin-right:-0.109px">2</span></div>
<div class="c" style="left:1509px;width:170px"><span style="letter-spacing:0.108px;margin-right:-0.108px">11/02/2021 3:06:29 PM</span></div>
</div>
<div class="row" style="top:638px;background:#f7f7f7">
<svg class="ic" style="left:5px;top:11px" width="14" height="14" viewBox="0 0 14 14"><rect x="0.85" y="0.85" width="12.3" height="12.3" rx="2" ry="2" fill="#fff" stroke="#767691" stroke-width="1.7"/></svg>
<div class="c" style="left:44px;width:110px"><span style="letter-spacing:-0.188px;margin-right:0.188px">HQ</span></div>
<div class="c" style="left:154px;width:160px"><span style="letter-spacing:-0.105px;margin-right:0.105px">HQ Warehouse</span></div>
<div class="c" style="left:314px;width:160px"><span style="letter-spacing:0.069px;margin-right:-0.069px">Standard Order</span></div>
<div class="c" style="left:474px;width:120px"><span style="letter-spacing:0.109px;margin-right:-0.109px">50003</span></div>
<div class="c r" style="left:594px;width:51px"><span style="letter-spacing:0.109px;margin-right:-0.109px">10</span></div>
<div class="c" style="left:645px;width:246px"><span style="letter-spacing:-0.177px;margin-right:0.177px">C_OrderLine_Sales Order Line</span></div>
<div class="c" style="left:891px;width:207px"></div>
<div class="btn"></div>
<svg class="ic" style="left:918.00px;top:9.80px;" width="13.71" height="13.71" viewBox="0 -1408 1536 1536"><path fill="#333" transform="scale(1,-1)" d="M1280 608v480q0 26 -19 45t-45 19h-480q-42 0 -59 -39q-17 -41 14 -70l144 -144l-534 -534q-19 -19 -19 -45t19 -45l102 -102q19 -19 45 -19t45 19l534 534l144 -144q18 -19 45 -19q12 0 25 5q39 17 39 59zM1536 1120v-960q0 -119 -84.5 -203.5t-203.5 -84.5h-960 q-119 0 -203.5 84.5t-84.5 203.5v960q0 119 84.5 203.5t203.5 84.5h960q119 0 203.5 -84.5t84.5 -203.5z"/></svg>
<div class="a" style="left:938px;top:8px"><span style="letter-spacing:-0.116px;margin-right:0.116px">Record ID (1000004)</span></div>
<div class="c r" style="left:1098px;width:149px"><span style="letter-spacing:0.109px;margin-right:-0.109px">0</span></div>
<div class="c r" style="left:1247px;width:107px"><span style="letter-spacing:0.109px;margin-right:-0.109px">1</span></div>
<div class="c r" style="left:1354px;width:155px"><span style="letter-spacing:0.109px;margin-right:-0.109px">1</span></div>
<div class="c" style="left:1509px;width:170px"><span style="letter-spacing:0.176px;margin-right:-0.176px">11/02/2021 10:13:02 AM</span></div>
</div>
</div></body></html>
